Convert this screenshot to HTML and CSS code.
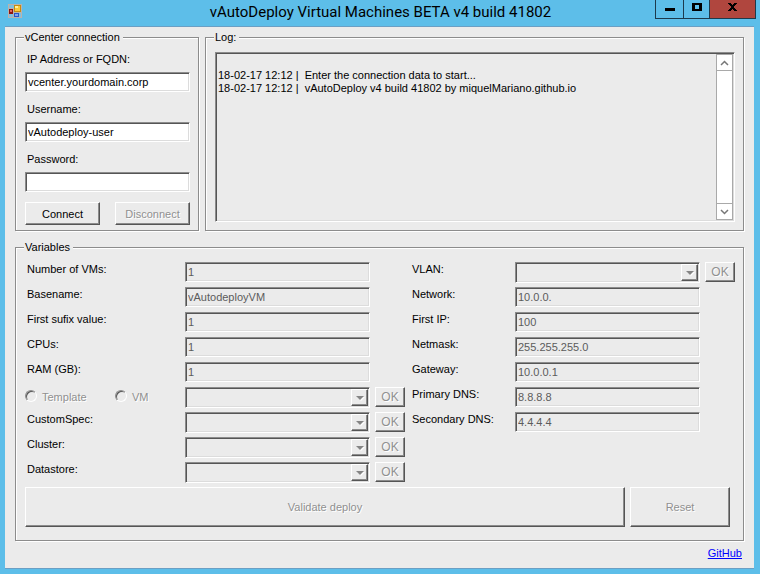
FILE: index.html
```html
<!DOCTYPE html>
<html lang="en">
<head>
<meta charset="utf-8">
<title>vAutoDeploy Virtual Machines BETA v4 build 41802</title>
<link rel="stylesheet" href="styles.css">
</head>
<body>
<div class="window">
  <header class="titlebar">
    <svg class="app-icon" width="14" height="14" viewBox="0 0 14 14" shape-rendering="crispEdges" aria-hidden="true">
      <rect width="14" height="14" fill="#b9b3ae"/>
      <rect x="1" y="1" width="5" height="3" fill="#7fc0e0"/>
      <rect x="1" y="10" width="4" height="3" fill="#7fc0e0"/>
      <rect x="11" y="9" width="2" height="4" fill="#7fc0e0"/>
      <rect x="1" y="5" width="4" height="5" fill="#8e1410"/>
      <rect x="2" y="6" width="2" height="2" fill="#e0675a"/>
      <rect x="6" y="1" width="7" height="7" fill="#c58a10"/>
      <rect x="7" y="2" width="5" height="5" fill="#fbc93a"/>
      <rect x="7" y="2" width="3" height="2" fill="#fff0a0"/>
      <rect x="6" y="9" width="5" height="4" fill="#2a55c4"/>
      <rect x="7" y="10" width="3" height="2" fill="#7ea6f0"/>
    </svg>
    <h1 class="title">vAutoDeploy Virtual Machines BETA v4 build 41802</h1>
    <div class="caption-buttons">
      <button class="caption minimize" type="button" aria-label="Minimize"><svg width="10" height="8" viewBox="0 0 10 8" shape-rendering="crispEdges"><path d="M0 5h10v3H0z"/></svg></button>
      <button class="caption maximize" type="button" aria-label="Maximize"><svg width="10" height="8" viewBox="0 0 10 8" shape-rendering="crispEdges"><path fill-rule="evenodd" d="M0 0h10v8H0zM3 2v4h4V2z"/></svg></button>
      <button class="caption close" type="button" aria-label="Close"><svg width="9" height="8" viewBox="0 0 9 8" shape-rendering="crispEdges"><path d="M0 0h3v1h1v1h1V1h1V0h3v1H8v1H7v1H6v2h1v1h1v1h1v1H6V7H5V6H4v1H3v1H0V7h1V6h1V5h1V3H2V2H1V1H0z"/></svg></button>
    </div>
  </header>

  <main class="client">
    <div class="top">
      <fieldset class="group connection">
        <legend>vCenter connection</legend>
        <label for="host">IP Address or FQDN:</label>
        <input class="box" id="host" type="text" value="vcenter.yourdomain.corp">
        <label for="user">Username:</label>
        <input class="box" id="user" type="text" value="vAutodeploy-user">
        <label for="pass">Password:</label>
        <input class="box" id="pass" type="password">
        <div class="actions">
          <button class="btn" type="button">Connect</button>
          <button class="btn" type="button" disabled>Disconnect</button>
        </div>
      </fieldset>

      <fieldset class="group log">
        <legend>Log:</legend>
        <div class="log-box">
          <textarea aria-label="Log" readonly>

18-02-17 12:12 |  Enter the connection data to start...
18-02-17 12:12 |  vAutoDeploy v4 build 41802 by miquelMariano.github.io</textarea>
          <div class="scrollbar">
            <button type="button" aria-label="Scroll up"><svg width="9" height="6" viewBox="0 0 9 6"><path d="M1 5l3.500-3.500L8 5"/></svg></button>
            <button type="button" aria-label="Scroll down"><svg width="9" height="6" viewBox="0 0 9 6"><path d="M1 1l3.500 3.500L8 1"/></svg></button>
          </div>
        </div>
      </fieldset>
    </div>

    <fieldset class="group variables">
      <legend>Variables</legend>
      <div class="columns">
        <div class="form form-left">
          <label for="count">Number of VMs:</label>
          <input class="box" id="count" type="text" value="1" disabled>
          <label for="base">Basename:</label>
          <input class="box" id="base" type="text" value="vAutodeployVM" disabled>
          <label for="sufix">First sufix value:</label>
          <input class="box" id="sufix" type="text" value="1" disabled>
          <label for="cpus">CPUs:</label>
          <input class="box" id="cpus" type="text" value="1" disabled>
          <label for="ram">RAM (GB):</label>
          <input class="box" id="ram" type="text" value="1" disabled>
          <div class="radios">
            <label class="radio"><input type="radio" name="source" disabled>Template</label>
            <label class="radio"><input type="radio" name="source" disabled>VM</label>
          </div>
          <div class="combo"><select class="box" aria-label="Source" disabled></select><span class="drop"></span></div>
          <button class="btn ok" type="button" disabled>OK</button>
          <label for="spec">CustomSpec:</label>
          <div class="combo"><select class="box" id="spec" disabled></select><span class="drop"></span></div>
          <button class="btn ok" type="button" disabled>OK</button>
          <label for="cluster">Cluster:</label>
          <div class="combo"><select class="box" id="cluster" disabled></select><span class="drop"></span></div>
          <button class="btn ok" type="button" disabled>OK</button>
          <label for="store">Datastore:</label>
          <div class="combo"><select class="box" id="store" disabled></select><span class="drop"></span></div>
          <button class="btn ok" type="button" disabled>OK</button>
        </div>
        <div class="form form-right">
          <label for="vlan">VLAN:</label>
          <div class="combo"><select class="box" id="vlan" disabled></select><span class="drop"></span></div>
          <button class="btn ok" type="button" disabled>OK</button>
          <label for="network">Network:</label>
          <input class="box" id="network" type="text" value="10.0.0." disabled>
          <label for="firstip">First IP:</label>
          <input class="box" id="firstip" type="text" value="100" disabled>
          <label for="netmask">Netmask:</label>
          <input class="box" id="netmask" type="text" value="255.255.255.0" disabled>
          <label for="gateway">Gateway:</label>
          <input class="box" id="gateway" type="text" value="10.0.0.1" disabled>
          <label for="dns1">Primary DNS:</label>
          <input class="box" id="dns1" type="text" value="8.8.8.8" disabled>
          <label for="dns2">Secondary DNS:</label>
          <input class="box" id="dns2" type="text" value="4.4.4.4" disabled>
        </div>
      </div>
      <div class="submit">
        <button class="btn validate" type="button" disabled>Validate deploy</button>
        <button class="btn reset" type="button" disabled>Reset</button>
      </div>
    </fieldset>
    <a class="link" href="#github">GitHub</a>
  </main>
</div>
</body>
</html>
```
FILE: styles.css
```css
:root {
  --blue: #5dbee9;
  --face: #ebebeb;
  --shadow: #8c8c8c;
  --dark: #555;
  --light: #dcdcdc;
}

* { box-sizing: border-box; }

body {
  margin: 0;
  background: var(--blue);
  color: #000;
  font: 11px/14px "Liberation Sans", Arial, sans-serif;
}

button, input, select, textarea {
  margin: 0;
  font: inherit;
  color: inherit;
  border-radius: 0;
  appearance: none;
}

.window {
  display: flex;
  flex-direction: column;
  min-height: 100vh;
  padding: 0 6px 5px 5px;
}

/* Title bar */
.titlebar {
  display: grid;
  grid-template-columns: 1fr auto 1fr;
  height: 26px;
  margin-right: -2px;
}

.app-icon { margin: 4px 0 0 3px; }

.title {
  margin: 0;
  font: 15px/24px Roboto, "Open Sans", sans-serif;
  white-space: nowrap;
}

.caption-buttons {
  display: flex;
  justify-self: end;
  height: 19px;
  border: solid #1d3a4c;
  border-width: 0 0 1px 1px;
}

.caption {
  display: flex;
  justify-content: center;
  padding: 3px 0 0;
  border: 0;
  border-right: 1px solid #1d3a4c;
  background: var(--blue);
}

.minimize { width: 28px; }
.maximize { width: 26px; }
.close { width: 46px; background: #b0463e; }

/* Client area */
.client {
  display: flex;
  flex: 1;
  flex-direction: column;
  padding: 4px 9px 0 10px;
  border: solid #6b9fc4;
  border-width: 1px 0;
  background: var(--face);
}

.top {
  display: grid;
  grid-template-columns: 185px 1fr;
  gap: 5px;
}

/* The etched frame: a grey line with a white one beside it */
.group {
  min-width: 0;
  margin: 0 1px 1px 0;
  padding: 8px 8px 5px 9px;
  border: 1px solid var(--shadow);
  box-shadow: 1px 1px #fff, inset 1px 1px #fff;
}

.group legend {
  margin-left: -1px;
  padding: 0 3px 0 1px;
  background: var(--face);
  line-height: 13px;
}

label { padding-left: 2px; }

/* Sunken fields */
.box, .log-box {
  border: 1px solid;
  border-color: var(--shadow) #fff #fff var(--shadow);
  box-shadow: inset 1px 1px var(--dark), inset -1px -1px var(--light);
}

.box {
  display: block;
  width: 100%;
  height: 20px;
  padding: 1px 2px;
  background: #fff;
  opacity: 1;
}

.box:disabled {
  background: var(--face);
  color: #5c5c5c;
}

/* Raised buttons */
.btn {
  padding: 0;
  border: 1px solid;
  border-color: #fff var(--dark) var(--dark) #fff;
  box-shadow: inset -1px -1px var(--shadow);
  background: var(--face);
}

.btn:disabled {
  color: #909090;
  text-shadow: 1px 1px #fff;
}

.connection label {
  display: block;
  margin-bottom: 6px;
}

.connection .box { margin-bottom: 10px; }

.actions {
  display: flex;
  justify-content: space-between;
}

.actions .btn {
  width: 75px;
  height: 23px;
}

/* Log */
.log { padding-bottom: 8px; }

.log-box {
  display: flex;
  height: 170px;
  padding: 1px;
}

.log-box textarea {
  flex: 1;
  min-width: 0;
  padding: 2px 1px;
  border: 0;
  outline: 0;
  background: transparent;
  line-height: 13px;
  resize: none;
  overflow: hidden;
}

.scrollbar {
  display: flex;
  flex-direction: column;
  justify-content: space-between;
  width: 17px;
  border: 1px solid #a9a9a9;
  background: #fff;
}

.scrollbar button {
  display: grid;
  place-items: center;
  height: 16px;
  padding: 0;
  border: 0;
  background: #fff;
}

.scrollbar button:first-child { border-bottom: 1px solid #a9a9a9; }
.scrollbar button:last-child { border-top: 1px solid #a9a9a9; }

.scrollbar path {
  fill: none;
  stroke: #777;
  stroke-width: 1.5;
}

/* Variables */
.variables {
  margin-top: 9px;
  padding-bottom: 13px;
}

.columns {
  display: grid;
  grid-template-columns: 380fr 325fr;
  gap: 5px;
}

.form {
  display: grid;
  grid-auto-rows: 25px;
  align-content: start;
  align-items: start;
  column-gap: 5px;
}

.form-left { grid-template-columns: 155px minmax(0, 1fr) 30px; }
.form-right { grid-template-columns: 100px minmax(0, 1fr) 30px; }

.form > label, .radios { grid-column: 1; }

.combo {
  position: relative;
}

.combo .box { height: 21px; }

.drop {
  position: absolute;
  top: 2px;
  right: 2px;
  width: 17px;
  height: 17px;
  border: 1px solid;
  border-color: #fff var(--dark) var(--dark) #fff;
  box-shadow: inset -1px -1px var(--shadow);
  background: var(--face);
  pointer-events: none;
}

.drop::after {
  content: "";
  position: absolute;
  top: 6px;
  left: 4px;
  border: solid transparent;
  border-width: 4px 4px 0;
  border-top-color: #858585;
  filter: drop-shadow(1px 1px #fff);
}

.ok { height: 20px; font-size: 12px; }

.radios {
  display: flex;
  padding-top: 3px;
}

.radio {
  display: flex;
  gap: 5px;
  width: 90px;
  padding: 0;
  color: #909090;
  text-shadow: 1px 1px #fff;
}

.radio:last-child { width: auto; }

.radio input {
  width: 12px;
  height: 12px;
  border: 1px solid;
  border-color: var(--shadow) #fff #fff var(--shadow);
  border-radius: 50%;
  box-shadow: inset 1px 1px var(--dark);
}

.submit {
  display: flex;
  gap: 5px;
  padding-right: 5px;
}

.submit .btn { height: 40px; }
.validate { flex: 1; }
.reset { width: 100px; }

.link {
  align-self: flex-end;
  margin: 4px 3px 0 0;
  color: #00f;
}
```
